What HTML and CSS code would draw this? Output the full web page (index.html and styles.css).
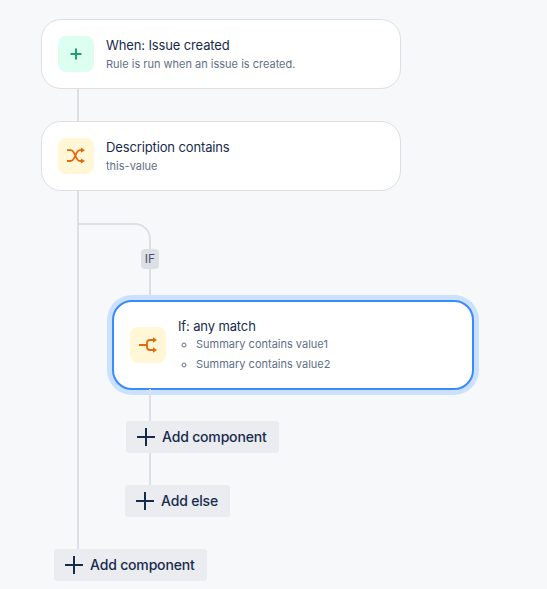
FILE: index.html
```
<!DOCTYPE html>
<html lang="en">
<head>
<meta charset="utf-8">
<title>Rule</title>
<link rel="stylesheet" href="styles.css">
</head>
<body>
<main class="tree">
  <section class="card">
    <span class="tile tile-green">
      <svg width="16" height="16" viewBox="0 0 16 16"><path d="M8 2.500v11M2.500 8h11" class="stroke-green"/></svg>
    </span>
    <div class="body">
      <div class="title">When: Issue created</div>
      <div class="sub">Rule is run when an issue is created.</div>
    </div>
  </section>
  <div class="stem stem-main"></div>
  <section class="card">
    <span class="tile tile-yellow">
      <svg width="20" height="20" viewBox="0 0 20 20"><path d="M1 4.200h3.500c1.500 0 2.500.8 3.300 2.400l3 6c.8 1.600 1.800 2.400 3.200 2.400H17M1 15h3.500c1.500 0 2.500-.8 3.300-2.400l3-6c.8-1.600 1.800-2.400 3.200-2.400H17" class="stroke-orange"/><path d="M15 1.600l4 2.600-4 2.600zM15 12.400l4 2.600-4 2.600z" class="fill-orange"/></svg>
    </span>
    <div class="body">
      <div class="title">Description contains</div>
      <div class="sub">this-value</div>
    </div>
  </section>
  <div class="rail">
    <div class="elbow"></div>
    <div class="badge">IF</div>
    <div class="stem stem-branch"></div>
    <section class="card card-selected">
      <span class="tile tile-yellow">
        <svg width="20" height="20" viewBox="0 0 20 20"><path d="M1 10h8M17 5h-5c-2 0-3 1-3 3v4c0 2 1 3 3 3h5" class="stroke-orange"/><path d="M15 2.200l4 2.800-4 2.800zM15 12.200l4 2.800-4 2.800z" class="fill-orange"/></svg>
      </span>
      <div class="body body-conds">
        <div class="title">If: any match</div>
        <ul class="conds">
          <li>Summary contains value1</li>
          <li>Summary contains value2</li>
        </ul>
      </div>
    </section>
    <div class="stem stem-branch"></div>
    <button class="add add-inner" type="button">
      <svg width="24" height="24" viewBox="0 0 24 24"><path d="M12 3v18M3 12h18" class="stroke-navy"/></svg>
      <span>Add component</span>
    </button>
    <div class="stem stem-branch"></div>
    <button class="add add-else" type="button">
      <svg width="24" height="24" viewBox="0 0 24 24"><path d="M12 3v18M3 12h18" class="stroke-navy"/></svg>
      <span>Add else</span>
    </button>
  </div>
  <button class="add add-outer" type="button">
    <svg width="24" height="24" viewBox="0 0 24 24"><path d="M12 3v18M3 12h18" class="stroke-navy"/></svg>
    <span>Add component</span>
  </button>
</main>
</body>
</html>
```
FILE: styles.css
```
* {
  box-sizing: border-box;
}
html, body {
  margin: 0;
  height: 589px;
  overflow: hidden;
  background: #f7f8f9;
}
body {
  font-family: Inter, "Liberation Sans", sans-serif;
  color: #172b4d;
}
.tree {
  padding: 19px 0 0 41px;
  display: flex;
  flex-direction: column;
  align-items: flex-start;
}
.card {
  width: 360px;
  height: 70px;
  padding: 0 16px;
  display: flex;
  align-items: center;
  gap: 12px;
  background: #fff;
  border: 1px solid #dcdfe4;
  border-radius: 20px;
}
.card-selected {
  flex: none;
  width: 362px;
  height: 90px;
  margin: -1px 0 -1px 33px;
  border: 2px solid #388bff;
  box-shadow: 0 0 0 5px #cce0ff;
  padding: 0 16px;
}
.tile {
  flex: none;
  width: 36px;
  height: 36px;
  border-radius: 8px;
  display: flex;
  align-items: center;
  justify-content: center;
}
.tile-green { background: #dcfff1; }
.tile-yellow { background: #fff7d6; }
.stroke-green { stroke: #22a06b; stroke-width: 2; fill: none; }
.stroke-orange { stroke: #e56910; stroke-width: 1.8; fill: none; }
.fill-orange { fill: #e56910; }
.stroke-navy { stroke: #172b4d; stroke-width: 2; fill: none; }
.body-conds {
  margin-top: -1px;
}
.title {
  font-size: 13px;
  line-height: 18px;
  letter-spacing: -0.13px;
}
.sub {
  margin-top: 2px;
  font-size: 11px;
  line-height: 16px;
  color: #626f86;
}
.conds {
  margin: 1px 0 0;
  padding: 0 0 0 18px;
  list-style: circle;
  font-size: 11px;
  line-height: 16px;
  color: #626f86;
}
.conds li {
  margin-top: 4px;
}
.conds li:first-child {
  margin-top: 0;
}
.stem {
  width: 2px;
  height: 32px;
  flex: none;
  background: #dcdfe4;
}
.stem-main {
  margin-left: 36px;
}
.stem-branch {
  margin-left: 70px;
}
.rail {
  margin-left: 36px;
  height: 358px;
  border-left: 2px solid #dcdfe4;
  display: flex;
  flex-direction: column;
  align-items: flex-start;
}
.elbow {
  margin-top: 32px;
  width: 72px;
  height: 26px;
  flex: none;
  border-top: 2px solid #dcdfe4;
  border-right: 2px solid #dcdfe4;
  border-top-right-radius: 16px;
}
.badge {
  margin-left: 62px;
  width: 18px;
  height: 20px;
  flex: none;
  border-radius: 4px;
  background: #dcdfe4;
  color: #44546f;
  font-size: 12px;
  line-height: 20px;
  text-align: center;
}
.add {
  height: 32px;
  flex: none;
  padding: 0 12px 0 8px;
  display: flex;
  align-items: center;
  gap: 4px;
  border: 0;
  border-radius: 3px;
  background: #ebecf0;
  color: #172b4d;
  font: 450 14px/20px Inter, "Liberation Sans", sans-serif;
  letter-spacing: -0.17px;
}
.add-inner { margin-left: 47px; }
.add-else { margin-left: 46px; }
.add-outer { margin-left: 13px; }
```
